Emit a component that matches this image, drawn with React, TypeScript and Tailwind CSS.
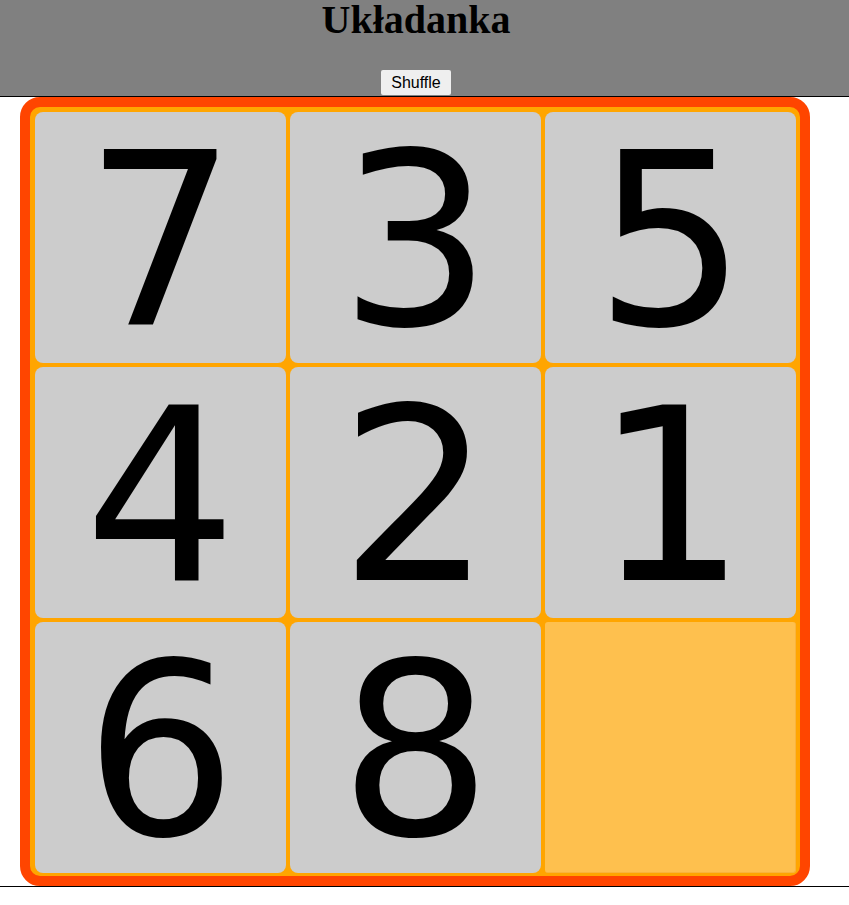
import React, { useState } from "react";

const start = [7, 3, 5, 4, 2, 1, 6, 8, 0];

function shuffled(): number[] {
  const a = [1, 2, 3, 4, 5, 6, 7, 8, 0];
  for (let i = a.length - 1; i > 0; i--) {
    const j = Math.floor(Math.random() * (i + 1));
    [a[i], a[j]] = [a[j], a[i]];
  }
  return a;
}

export default function App() {
  const [tiles, setTiles] = useState<number[]>(start);

  const move = (idx: number) => {
    const empty = tiles.indexOf(0);
    const r1 = Math.floor(idx / 3), c1 = idx % 3;
    const r2 = Math.floor(empty / 3), c2 = empty % 3;
    if (Math.abs(r1 - r2) + Math.abs(c1 - c2) !== 1) return;
    const next = [...tiles];
    [next[idx], next[empty]] = [next[empty], next[idx]];
    setTiles(next);
  };

  return (
    <div className="bg-white min-h-screen">
      {/* header */}
      <header className="h-[97px] bg-[#808080] border-b border-black flex flex-col items-center pr-[17px]">
        <h1 className="m-0 pt-[1px] text-[40px] leading-[38px] font-bold text-black font-['Liberation_Serif',serif]">
          Układanka
        </h1>
        <div className="flex-1" />
        <button
          onClick={() => setTiles(shuffled())}
          className="h-[25px] px-[10px] bg-[#efefef] text-black text-[16px] leading-none font-['Liberation_Sans',Arial,sans-serif] rounded-[2px] mb-px"
        >
          Shuffle
        </button>
      </header>

      {/* board */}
      <main className="border-b border-black">
        <div className="ml-[20px] w-[790px] h-[789px] border-[10px] border-[#ff4500] rounded-[20px] bg-[#ffa500] pt-[5px] pl-[5px] pr-[4px] pb-[3px]">
          <div className="grid grid-cols-[251px_251px_251px] grid-rows-[251px_251px_251px] gap-[4px]">
            {tiles.map((n, i) =>
              n === 0 ? (
                <div
                  key={i}
                  className="bg-[#fec04e] rounded-[3px] border-r border-b border-[#f9b43c]"
                />
              ) : (
                <div
                  key={i}
                  onClick={() => move(i)}
                  className="bg-[#cccccc] rounded-[8px] flex items-center justify-center pt-[9px] text-[240px] leading-none text-black font-['DejaVu_Sans',sans-serif] cursor-pointer select-none"
                >
                  {n}
                </div>
              )
            )}
          </div>
        </div>
      </main>
    </div>
  );
}
